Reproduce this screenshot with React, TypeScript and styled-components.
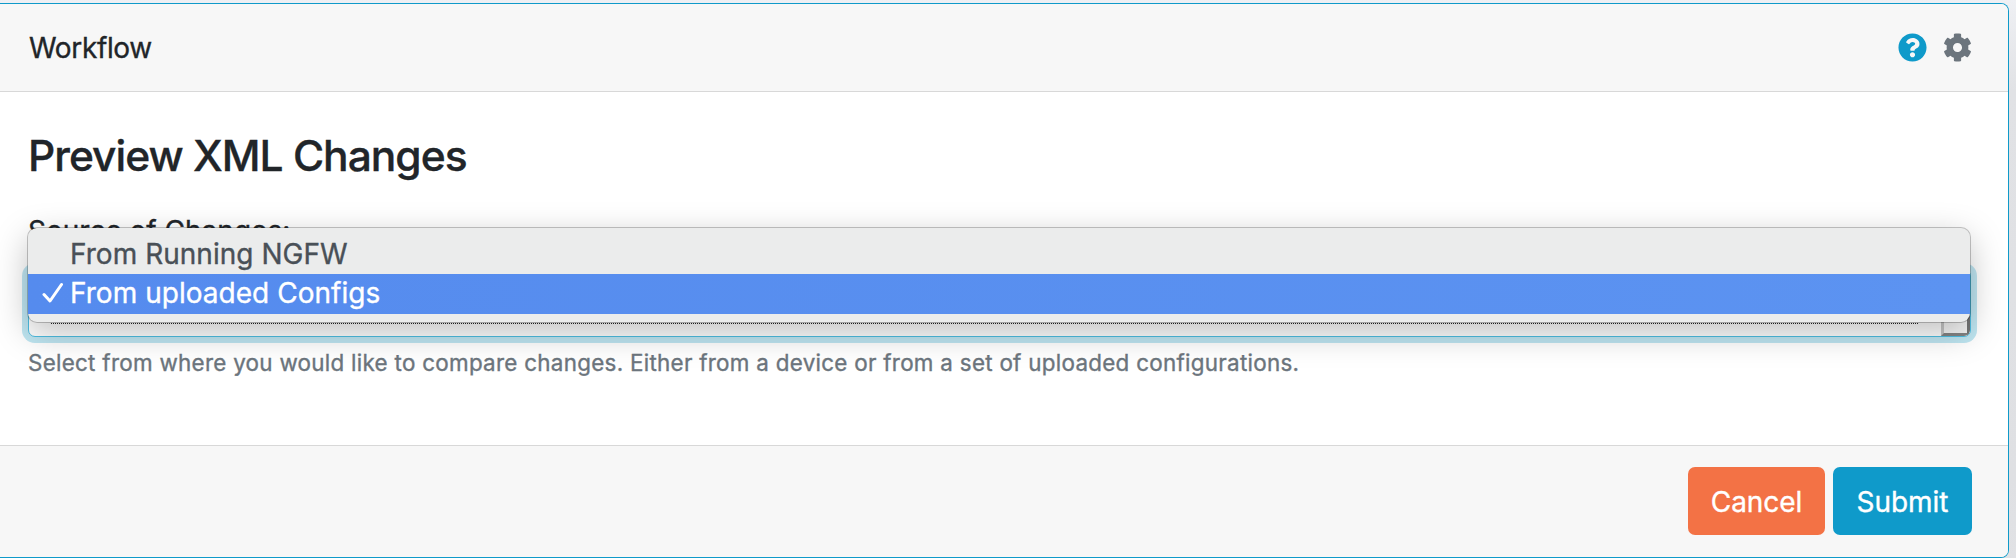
import React from "react";
import styled, { createGlobalStyle } from "styled-components";
import { FaCog, FaQuestionCircle } from "react-icons/fa";

const GlobalStyle = createGlobalStyle`
  *, *::before, *::after { box-sizing: border-box; }
  body {
    margin: 0;
    background: linear-gradient(#eff0f4 0, #e1e2e5 90px, #dfe0e3 480px, #e1e2e5 100%);
    font-family: Inter, "Liberation Sans", sans-serif;
    font-size: 28px;
    font-weight: 400;
    -webkit-text-stroke: 0.35px currentColor;
    color: #212529;
  }
`;

const Page = styled.main`
  height: 558px;
  padding: 3px 7px 0 0;
  overflow: hidden;
`;

const Card = styled.section`
  display: flex;
  flex-direction: column;
  height: 555px;
  border: 1px solid #0f9aca;
  border-left: 0;
  border-radius: 0 8px 8px 0;
  background: #fff;
  overflow: hidden;
`;

const CardHeader = styled.header`
  display: flex;
  align-items: center;
  justify-content: space-between;
  height: 88px;
  padding: 0 36px 0 29px;
  background: #f7f7f7;
  border-bottom: 1px solid #d8d8d8;
`;

const CardTitle = styled.span`
  line-height: 40px;
  letter-spacing: -0.35px;
`;

const HeaderIcons = styled.div`
  display: flex;
  gap: 16px;
  padding-bottom: 1px;
  font-size: 29px;
  svg { display: block; }
`;

const CardBody = styled.div`
  flex: 1;
  padding: 36px 37px 0 28px;
`;

const Heading = styled.h2`
  margin: 0;
  font-size: 42.5px;
  font-weight: 500;
  line-height: 56px;
  letter-spacing: -1px;
`;

const Label = styled.label`
  display: block;
  margin-top: 26px;
  height: 59px;
  line-height: 42px;
  letter-spacing: 0;
`;

const SelectBox = styled.div`
  position: relative;
  height: 68px;
  border: 1px solid #4fbfe3;
  border-radius: 7px;
  background: #fff;
  box-shadow: 0 0 0 6px #bfe6f2;
`;

const SelectInner = styled.div`
  display: flex;
  justify-content: space-between;
  height: 100%;
  padding-left: 22px;
  border-radius: 6px;
  overflow: hidden;
`;

const FocusOutline = styled.div`
  width: 1867px;
  height: 54px;
  border: 1px dotted #222;
`;

const ArrowButton = styled.div`
  width: 29px;
  border: 3px solid;
  border-color: #ddd #767676 #858585 #c8c8c8;
  background: #f6f6f6;
`;

const Menu = styled.ul`
  position: absolute;
  top: -42px;
  left: -1px;
  right: 0;
  height: 94px;
  margin: 0;
  padding: 6px 0 7px;
  list-style: none;
  border-radius: 9px;
  background: #ebecec;
  box-shadow: 0 0 0 1px rgba(0, 0, 0, 0.22), 0 10px 34px rgba(0, 0, 0, 0.26);
`;

const MenuItem = styled.li<{ $selected?: boolean }>`
  display: flex;
  align-items: center;
  height: 40px;
  padding-left: 14px;
  line-height: 40px;
  letter-spacing: 0.03px;
  padding-bottom: ${(p) => (p.$selected ? "2px" : "0")};
  color: ${(p) => (p.$selected ? "#fff" : "#495057")};
  background: ${(p) => (p.$selected ? "linear-gradient(90deg, #558bee, #5c93f1)" : "transparent")};
`;

const CheckSlot = styled.span`
  display: flex;
  width: 28px;
`;

const HelpText = styled.p`
  margin: 9px 0 0;
  font-size: 22.4px;
  line-height: 33px;
  letter-spacing: 0.285px;
  color: #6c757d;
`;

const CardFooter = styled.footer`
  display: flex;
  justify-content: flex-end;
  gap: 8px;
  height: 112px;
  padding: 21px 36px 0 0;
  background: #f7f7f7;
  border-top: 1px solid #d8d8d8;
`;

const Button = styled.button<{ $color: string; $width: number }>`
  width: ${(p) => p.$width}px;
  height: 68px;
  padding: 1px 0 0;
  border: 0;
  border-radius: 7px;
  background: ${(p) => p.$color};
  color: #fff;
  font: inherit;
  letter-spacing: -0.05px;
`;

export default function App() {
  return (
    <Page>
      <GlobalStyle />
      <Card>
        <CardHeader>
          <CardTitle>Workflow</CardTitle>
          <HeaderIcons>
            <FaQuestionCircle color="#0f9aca" />
            <FaCog color="#6c757d" />
          </HeaderIcons>
        </CardHeader>
        <CardBody>
          <Heading>Preview XML Changes</Heading>
          <Label>Source of Changes:</Label>
          <SelectBox>
            <SelectInner>
              <FocusOutline />
              <ArrowButton />
            </SelectInner>
            <Menu>
              <MenuItem>
                <CheckSlot />
                From Running NGFW
              </MenuItem>
              <MenuItem $selected>
                <CheckSlot>
                  <svg width="22" height="22" viewBox="0 0 22 22" fill="none" stroke="#fff" strokeWidth="3" strokeLinecap="round" strokeLinejoin="round">
                    <path d="M2 12.5 8 19 19.5 2.5" />
                  </svg>
                </CheckSlot>
                From uploaded Configs
              </MenuItem>
            </Menu>
          </SelectBox>
          <HelpText>
            Select from where you would like to compare changes. Either from a device or from a set of uploaded configurations.
          </HelpText>
        </CardBody>
        <CardFooter>
          <Button $color="#f37245" $width={137}>Cancel</Button>
          <Button $color="#0f9aca" $width={139}>Submit</Button>
        </CardFooter>
      </Card>
    </Page>
  );
}
